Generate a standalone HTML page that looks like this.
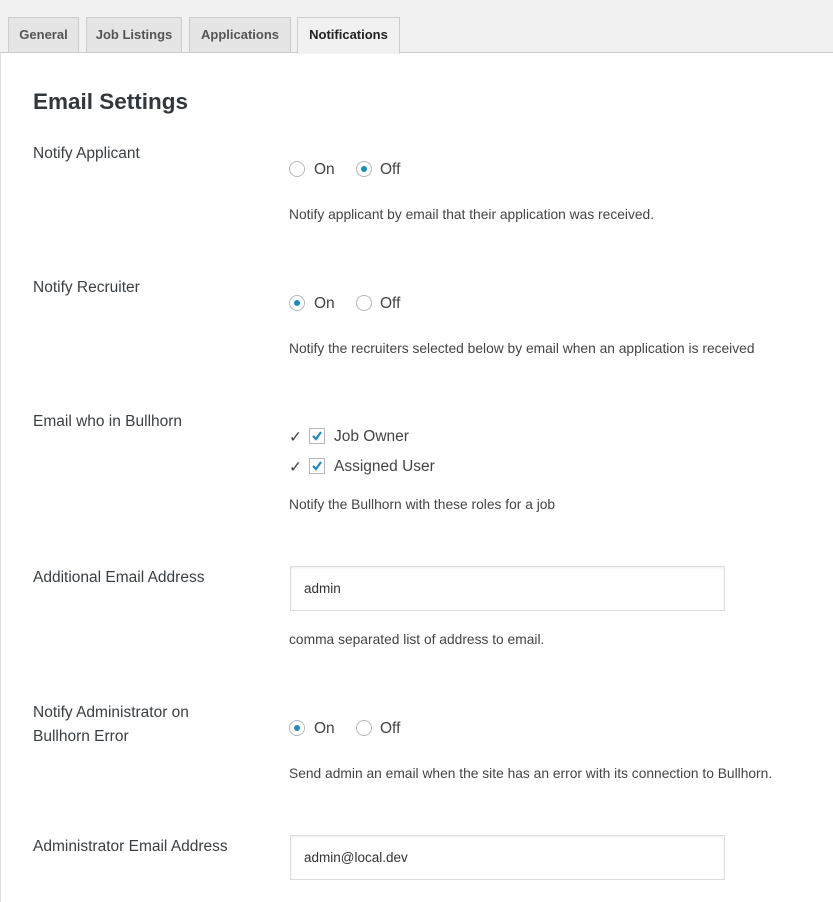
<!DOCTYPE html>
<html><head><meta charset="utf-8"><style>
*{margin:0;padding:0;box-sizing:border-box}
body{width:833px;height:902px;background:#f1f1f1;font-family:"Liberation Sans",sans-serif;color:#444;position:relative;overflow:hidden}
.tab{position:absolute;top:17px;height:36px;border:1px solid #ccc;border-bottom:none;background:#e5e5e5;font-size:13px;font-weight:bold;color:#555;text-align:center;line-height:34px}
.tab.act{background:#f1f1f1;color:#222;height:36px}
.panel{position:absolute;left:0;top:52px;width:833px;height:850px;background:#fff;border-top:1px solid #ccc;border-left:1px solid #ddd}
.a{position:absolute;white-space:nowrap}
h2{position:absolute;left:33px;top:89px;font-size:22.5px;font-weight:bold;color:#32373c}
.lbl{font-size:15.5px;color:#3a3f44;line-height:24px}
.desc{font-size:13.8px;color:#444}
.opt{font-size:15.5px;color:#444}
.rad{position:absolute;width:16px;height:16px;border:1px solid #b4b9be;border-radius:50%;background:#fff}
.rad.on::after{content:"";position:absolute;left:4px;top:4px;width:6px;height:6px;border-radius:50%;background:#1e8cbe}
.cb{position:absolute;width:16px;height:16px;border:1px solid #b4b9be;background:#fff}
.inp{position:absolute;left:290px;width:435px;height:45px;border:1px solid #ddd;box-shadow:inset 0 1px 2px rgba(0,0,0,.07);font-size:13.5px;color:#333;padding-left:13px;line-height:43px}
</style></head><body>
<div class="tab" style="left:8px;width:71px">General</div>
<div class="tab" style="left:86px;width:96px">Job Listings</div>
<div class="tab" style="left:189px;width:102px">Applications</div>
<div class="panel"></div>
<div class="tab act" style="left:297px;width:103px;border-bottom:1px solid #f1f1f1;height:37px">Notifications</div>
<h2>Email Settings</h2>

<div class="a lbl" style="left:33px;top:142px">Notify Applicant</div>
<div class="rad" style="left:289px;top:161px"></div><div class="a opt" style="left:314px;top:161px">On</div>
<div class="rad on" style="left:356px;top:161px"></div><div class="a opt" style="left:380px;top:161px">Off</div>
<div class="a desc" style="left:289px;top:207px">Notify applicant by email that their application was received.</div>

<div class="a lbl" style="left:33px;top:276px">Notify Recruiter</div>
<div class="rad on" style="left:289px;top:295px"></div><div class="a opt" style="left:314px;top:295px">On</div>
<div class="rad" style="left:356px;top:295px"></div><div class="a opt" style="left:380px;top:295px">Off</div>
<div class="a desc" style="left:289px;top:341px">Notify the recruiters selected below by email when an application is received</div>

<div class="a lbl" style="left:33px;top:410px">Email who in Bullhorn</div>
<div class="a opt" style="left:289px;top:428px">✓</div>
<div class="cb" style="left:309px;top:428px"><svg width="14" height="14" viewBox="0 0 14 14" style="position:absolute;left:0;top:0"><path d="M3 7 L6 10 L11 3" stroke="#1e8cbe" stroke-width="2.2" fill="none"/></svg></div>
<div class="a opt" style="left:334px;top:428px">Job Owner</div>
<div class="a opt" style="left:289px;top:458px">✓</div>
<div class="cb" style="left:309px;top:458px"><svg width="14" height="14" viewBox="0 0 14 14" style="position:absolute;left:0;top:0"><path d="M3 7 L6 10 L11 3" stroke="#1e8cbe" stroke-width="2.2" fill="none"/></svg></div>
<div class="a opt" style="left:334px;top:458px">Assigned User</div>
<div class="a desc" style="left:289px;top:497px">Notify the Bullhorn with these roles for a job</div>

<div class="a lbl" style="left:33px;top:566px">Additional Email Address</div>
<div class="inp" style="top:566px">admin</div>
<div class="a desc" style="left:289px;top:632px">comma separated list of address to email.</div>

<div class="a lbl" style="left:33px;top:701px">Notify Administrator on<br>Bullhorn Error</div>
<div class="rad on" style="left:289px;top:720px"></div><div class="a opt" style="left:314px;top:720px">On</div>
<div class="rad" style="left:356px;top:720px"></div><div class="a opt" style="left:380px;top:720px">Off</div>
<div class="a desc" style="left:289px;top:766px">Send admin an email when the site has an error with its connection to Bullhorn.</div>

<div class="a lbl" style="left:33px;top:835px">Administrator Email Address</div>
<div class="inp" style="top:835px">admin@local.dev</div>
</body></html>
